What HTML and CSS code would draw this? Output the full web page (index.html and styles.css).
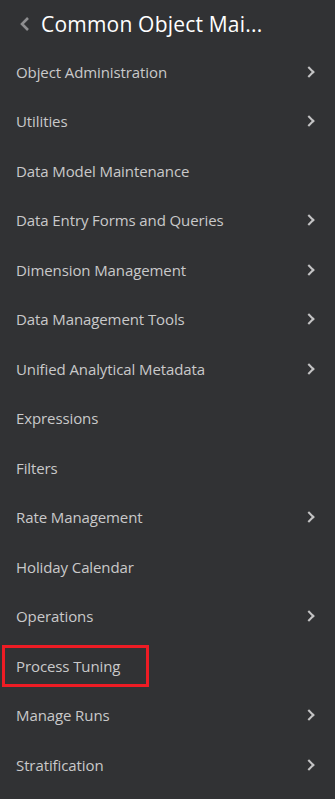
FILE: index.html
```html
<!DOCTYPE html>
<html lang="en">
<head>
    <meta charset="UTF-8">
    <meta name="viewport" content="width=device-width, initial-scale=1.0">
    <title>Common Object Maintenance</title>
    <link rel="stylesheet" href="styles.css">
</head>
<body>

    <div class="menu">

        <!-- Kopfzeile -->
        <div class="menu-header">
            <svg class="back" width="12" height="16" viewBox="0 0 12 16"><path d="M9 2 L3 8 L9 14" fill="none" stroke="#8e8e90" stroke-width="2.6"/></svg>
            <span class="menu-title">Common Object Mai...</span>
        </div>

        <!-- Menüpunkte -->
        <ul class="menu-list">
            <li class="menu-item has-sub">Object Administration</li>
            <li class="menu-item has-sub">Utilities</li>
            <li class="menu-item">Data Model Maintenance</li>
            <li class="menu-item has-sub">Data Entry Forms and Queries</li>
            <li class="menu-item has-sub">Dimension Management</li>
            <li class="menu-item has-sub">Data Management Tools</li>
            <li class="menu-item has-sub">Unified Analytical Metadata</li>
            <li class="menu-item">Expressions</li>
            <li class="menu-item">Filters</li>
            <li class="menu-item has-sub">Rate Management</li>
            <li class="menu-item">Holiday Calendar</li>
            <li class="menu-item has-sub">Operations</li>
            <li class="menu-item marked"><span class="mark">Process Tuning</span></li>
            <li class="menu-item has-sub">Manage Runs</li>
            <li class="menu-item has-sub">Stratification</li>
        </ul>

    </div>

</body>
</html>
```

FILE: styles.css
```css
body {
    margin: 0;
    padding: 0;
    background-color: #313234;
    font-family: "Open Sans", "Noto Sans", sans-serif;
    color: #c9c9ca;
}
.menu {
    width: 335px;
    height: 799px;
    overflow: hidden;
}
.menu-header {
    height: 47px;
    display: flex;
    align-items: center;
    padding-left: 19px;
}
.back {
    margin-right: 10px;
}
.menu-title {
    color: #ffffff;
    font-size: 21px;
    letter-spacing: 0.2px;
}
.menu-list {
    list-style: none;
    margin: 0;
    padding: 0;
}
.menu-item {
    height: 49.5px;
    display: flex;
    align-items: center;
    justify-content: space-between;
    padding: 0 22px 0 16px;
    font-size: 15px;
    letter-spacing: -0.1px;
}
.menu-item.has-sub::after {
    content: "";
    width: 6px;
    height: 6px;
    border-right: 2.5px solid #c4c4c5;
    border-top: 2.5px solid #c4c4c5;
    transform: rotate(45deg);
}
.menu-item.marked {
    padding-left: 2px;
}
.mark {
    display: flex;
    align-items: center;
    height: 36px;
    padding: 0 26px 0 11px;
    border: 3px solid #ed1c24;
}
```
